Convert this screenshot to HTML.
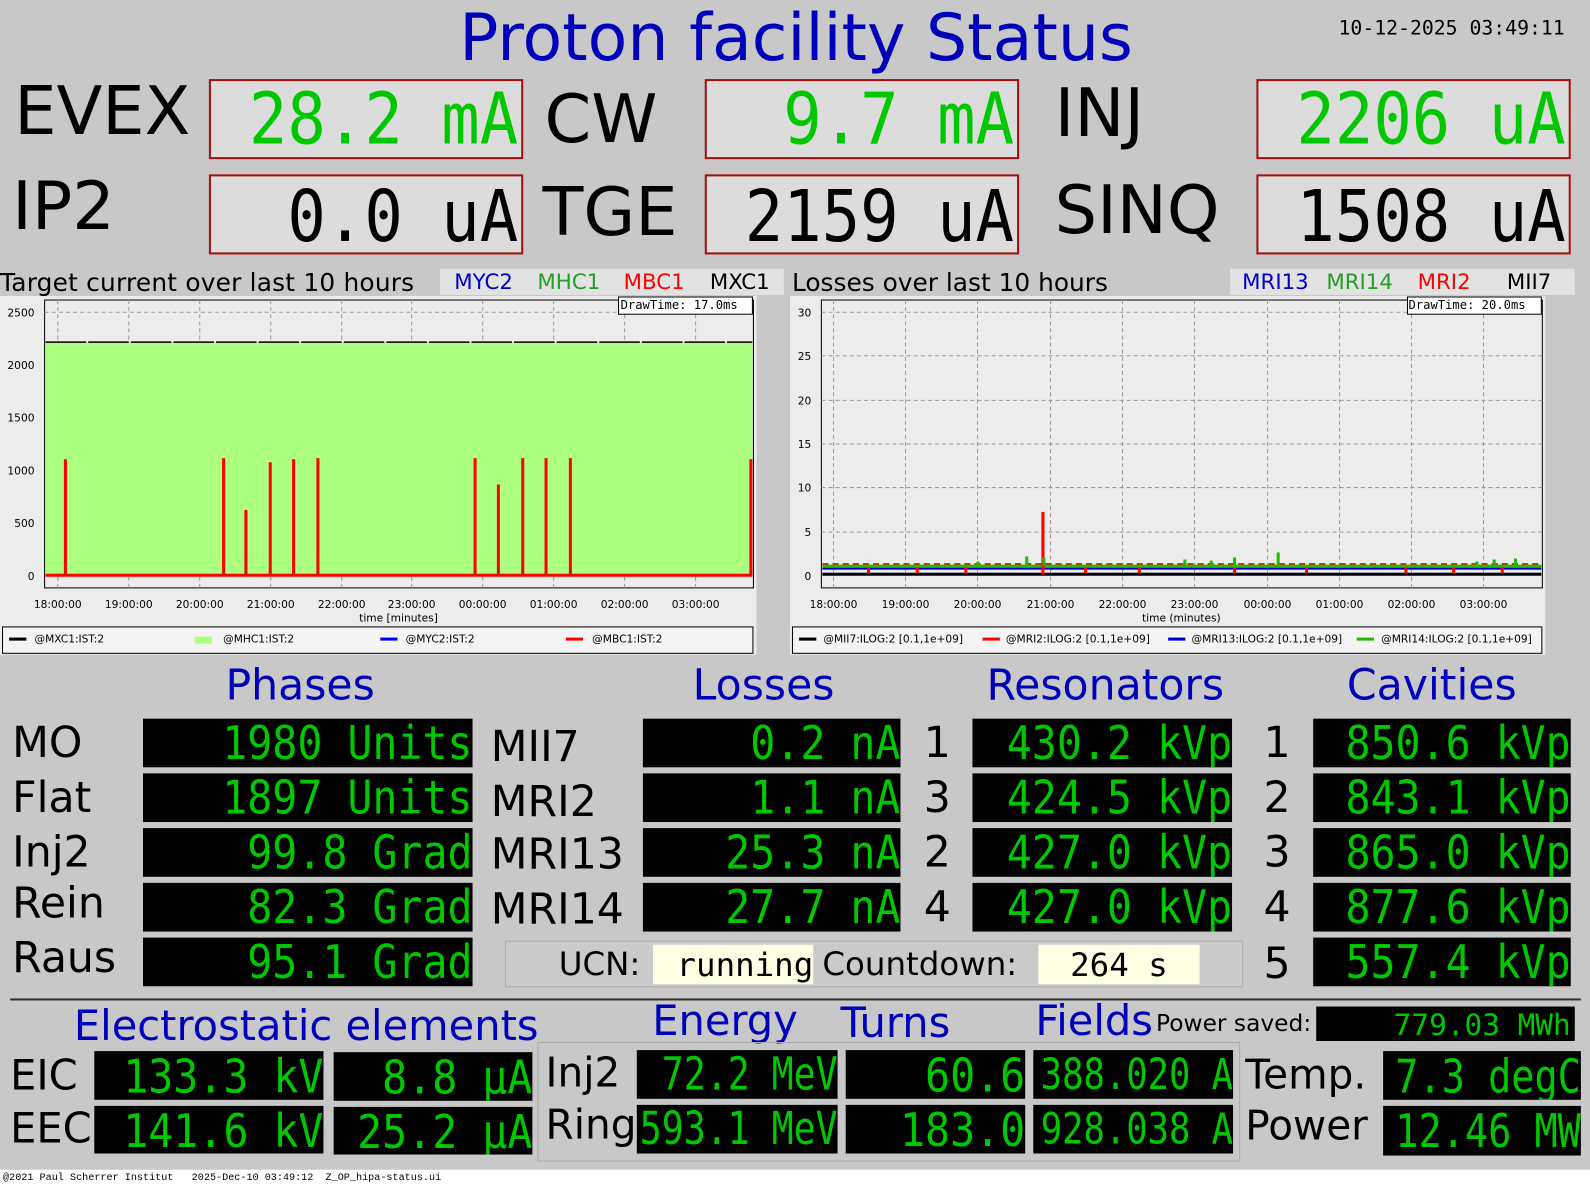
<!DOCTYPE html>
<html><head><meta charset="utf-8"><style>
html,body{margin:0;padding:0;width:1590px;height:1190px;overflow:hidden;background:#c8c8c8}
#w{position:absolute;left:0;top:0;width:1568px;height:1174px;transform:scale(1.01403,1.01363);transform-origin:0 0;background:#c8c8c8;font-family:"DejaVu Sans","Liberation Sans",sans-serif}
.a{position:absolute;white-space:pre}
.lbl{position:absolute;white-space:pre;color:#000;font-family:"DejaVu Sans",sans-serif}
.hd{position:absolute;white-space:pre;color:#0000bb;font-family:"DejaVu Sans",sans-serif;text-align:center}
.tb{position:absolute;background:#dcdcdc;border:2px solid #a01010;box-sizing:border-box;text-align:right;font-family:"DejaVu Sans Mono",monospace;white-space:pre;overflow:hidden}
.bb{position:absolute;background:#000;color:#00c800;text-align:right;font-family:"DejaVu Sans Mono",monospace;white-space:pre;overflow:hidden}
.bb span,.tb span{display:inline-block;transform-origin:center}
.lg{position:absolute;top:0;font-size:21px;line-height:26px}
</style></head><body><div id="w">
<div class="hd" style="left:400px;top:-2px;width:770px;font-size:64px;line-height:80px">Proton facility Status</div>
<div class="a" style="left:1320px;top:16px;font-family:'DejaVu Sans Mono',monospace;font-size:19.5px">10-12-2025 03:49:11</div>

<div class="lbl" style="left:14px;top:70px;font-size:66px;line-height:80px">EVEX</div>
<div class="lbl" style="left:537px;top:78px;font-size:66px;line-height:80px">CW</div>
<div class="lbl" style="left:1040px;top:72px;font-size:66px;line-height:80px">INJ</div>
<div class="lbl" style="left:12px;top:164px;font-size:66px;line-height:80px">IP2</div>
<div class="lbl" style="left:535px;top:170px;font-size:66px;line-height:80px">TGE</div>
<div class="lbl" style="left:1040px;top:168px;font-size:66px;line-height:80px">SINQ</div>

<div class="tb" style="left:206px;top:78px;width:310px;height:79px;color:#00c800;font-size:63px;line-height:76px;padding-right:3px"><span style="transform:scaleY(1.12)">28.2 mA</span></div>
<div class="tb" style="left:695px;top:78px;width:310px;height:79px;color:#00c800;font-size:63px;line-height:76px;padding-right:3px"><span style="transform:scaleY(1.12)">9.7 mA</span></div>
<div class="tb" style="left:1239px;top:78px;width:310px;height:79px;color:#00c800;font-size:63px;line-height:76px;padding-right:3px"><span style="transform:scaleY(1.12)">2206 uA</span></div>
<div class="tb" style="left:206px;top:172px;width:310px;height:79px;color:#000;font-size:63px;line-height:80px;padding-right:3px"><span style="transform:scaleY(1.12)">0.0 uA</span></div>
<div class="tb" style="left:695px;top:172px;width:310px;height:79px;color:#000;font-size:63px;line-height:80px;padding-right:3px"><span style="transform:scaleY(1.12)">2159 uA</span></div>
<div class="tb" style="left:1239px;top:172px;width:310px;height:79px;color:#000;font-size:63px;line-height:80px;padding-right:3px"><span style="transform:scaleY(1.12)">1508 uA</span></div>

<!-- chart titles -->
<div class="lbl" style="left:0;top:264px;font-size:24.5px;line-height:30px;letter-spacing:0.2px">Target current over last 10 hours</div>
<div class="a" style="left:434px;top:265px;width:339px;height:26px;background:#e2e2e2">
<span class="lg" style="left:14px;color:#0000cc">MYC2</span><span class="lg" style="left:96px;color:#22a022">MHC1</span><span class="lg" style="left:181px;color:#ff0000">MBC1</span><span class="lg" style="left:266px">MXC1</span></div>
<div class="lbl" style="left:781px;top:264px;font-size:24.5px;line-height:30px">Losses over last 10 hours</div>
<div class="a" style="left:1213px;top:265px;width:340px;height:26px;background:#e2e2e2">
<span class="lg" style="left:12px;color:#0000cc">MRI13</span><span class="lg" style="left:95px;color:#22a022">MRI14</span><span class="lg" style="left:185px;color:#ff0000">MRI2</span><span class="lg" style="left:273px">MII7</span></div>

<svg class="a" style="left:0;top:292px" width="746" height="354" viewBox="0 292 746 354" font-family="DejaVu Sans" font-size="10.5">
<rect x="0" y="292" width="746" height="354" fill="#ececec"/>
<rect x="44" y="296" width="699" height="284" fill="#ececec" stroke="#000"/>
<g stroke="#999" stroke-dasharray="4,3">
<line x1="44" x2="743" y1="308" y2="308"/>
<line x1="57" x2="57" y1="296" y2="580"/><line x1="127" x2="127" y1="296" y2="580"/><line x1="197" x2="197" y1="296" y2="580"/><line x1="267" x2="267" y1="296" y2="580"/><line x1="337" x2="337" y1="296" y2="580"/><line x1="406" x2="406" y1="296" y2="580"/><line x1="476" x2="476" y1="296" y2="580"/><line x1="546" x2="546" y1="296" y2="580"/><line x1="616" x2="616" y1="296" y2="580"/><line x1="686" x2="686" y1="296" y2="580"/>
</g>
<rect x="45" y="338" width="697" height="230" fill="#adff7f"/>
<line x1="45" x2="742" y1="337.5" y2="337.5" stroke="#000" stroke-width="1.5" stroke-dasharray="40,2"/>
<g fill="#f00">
<rect x="45" y="566" width="697" height="3"/>
<rect x="63" y="453" width="3" height="114"/><rect x="219" y="452" width="3" height="115"/><rect x="241" y="503" width="3" height="64"/><rect x="265" y="456" width="3" height="111"/><rect x="288" y="453" width="3" height="114"/><rect x="312" y="452" width="3" height="115"/><rect x="467" y="452" width="3" height="115"/><rect x="490" y="478" width="3" height="89"/><rect x="514" y="452" width="3" height="115"/><rect x="537" y="452" width="3" height="115"/><rect x="561" y="452" width="3" height="115"/><rect x="739" y="453" width="3" height="114"/>
</g>
<g text-anchor="end"><text x="34" y="312">2500</text><text x="34" y="364">2000</text><text x="34" y="416">1500</text><text x="34" y="468">1000</text><text x="34" y="520">500</text><text x="34" y="572">0</text></g>
<g text-anchor="middle"><text x="57" y="600">18:00:00</text><text x="127" y="600">19:00:00</text><text x="197" y="600">20:00:00</text><text x="267" y="600">21:00:00</text><text x="337" y="600">22:00:00</text><text x="406" y="600">23:00:00</text><text x="476" y="600">00:00:00</text><text x="546" y="600">01:00:00</text><text x="616" y="600">02:00:00</text><text x="686" y="600">03:00:00</text><text x="393" y="613">time [minutes]</text></g>
<rect x="610" y="293" width="132" height="17" fill="#fff" stroke="#000"/>
<text x="612" y="305" font-family="DejaVu Sans Mono" font-size="12">DrawTime: 17.0ms</text>
<rect x="2.5" y="618.5" width="740" height="26" fill="#f4f4f4" stroke="#000"/>
<rect x="9" y="629" width="17" height="3"/><text x="34" y="634">@MXC1:IST:2</text>
<rect x="192" y="628" width="17" height="7" fill="#adff7f"/><text x="220" y="634">@MHC1:IST:2</text>
<rect x="375" y="629" width="17" height="3" fill="#00f"/><text x="400" y="634">@MYC2:IST:2</text>
<rect x="558" y="629" width="17" height="3" fill="#f00"/><text x="584" y="634">@MBC1:IST:2</text>
</svg>

<svg class="a" style="left:779px;top:292px" width="745" height="354" viewBox="779 292 745 354" font-family="DejaVu Sans" font-size="10.5">
<rect x="779" y="292" width="745" height="354" fill="#ececec"/>
<rect x="810" y="296" width="711" height="284" fill="#ececec" stroke="#000"/>
<g stroke="#999" stroke-dasharray="4,3">
<line x1="810" x2="1521" y1="308" y2="308"/><line x1="810" x2="1521" y1="351" y2="351"/><line x1="810" x2="1521" y1="395" y2="395"/><line x1="810" x2="1521" y1="438" y2="438"/><line x1="810" x2="1521" y1="481" y2="481"/><line x1="810" x2="1521" y1="525" y2="525"/>
<line x1="822" x2="822" y1="296" y2="580"/><line x1="893" x2="893" y1="296" y2="580"/><line x1="964" x2="964" y1="296" y2="580"/><line x1="1036" x2="1036" y1="296" y2="580"/><line x1="1107" x2="1107" y1="296" y2="580"/><line x1="1178" x2="1178" y1="296" y2="580"/><line x1="1250" x2="1250" y1="296" y2="580"/><line x1="1321" x2="1321" y1="296" y2="580"/><line x1="1392" x2="1392" y1="296" y2="580"/><line x1="1463" x2="1463" y1="296" y2="580"/>
</g>
<line x1="811" x2="1520" y1="557" y2="557" stroke="#f00" stroke-width="3" stroke-dasharray="6,4"/>
<rect x="811" y="560" width="709" height="2" fill="#0000cc"/>
<rect x="811" y="557" width="709" height="3" fill="#22bb00"/>
<rect x="811" y="565" width="709" height="3" fill="#000"/>
<rect x="1027" y="505" width="3" height="62" fill="#f00"/>
<g fill="#22bb00"><rect x="1011" y="549" width="3" height="9"/><rect x="1259" y="545" width="3" height="13"/><rect x="1028" y="550" width="3" height="8"/><rect x="1216" y="550" width="3" height="8"/><rect x="1493" y="551" width="3" height="7"/><rect x="1193" y="553" width="3" height="5"/><rect x="1472" y="552" width="3" height="6"/><rect x="1455" y="554" width="3" height="4"/><rect x="963" y="554" width="3" height="4"/><rect x="1167" y="552" width="3" height="6"/></g>
<g fill="#f00"><rect x="855" y="560" width="3" height="6"/><rect x="903" y="560" width="3" height="6"/><rect x="951" y="560" width="3" height="6"/><rect x="1069" y="560" width="3" height="6"/><rect x="1122" y="560" width="3" height="6"/><rect x="1216" y="560" width="3" height="6"/><rect x="1287" y="560" width="3" height="6"/><rect x="1385" y="560" width="3" height="6"/><rect x="1432" y="560" width="3" height="6"/><rect x="1480" y="560" width="3" height="6"/></g>
<g text-anchor="end"><text x="800" y="312">30</text><text x="800" y="355">25</text><text x="800" y="399">20</text><text x="800" y="442">15</text><text x="800" y="485">10</text><text x="800" y="529">5</text><text x="800" y="572">0</text></g>
<g text-anchor="middle"><text x="822" y="600">18:00:00</text><text x="893" y="600">19:00:00</text><text x="964" y="600">20:00:00</text><text x="1036" y="600">21:00:00</text><text x="1107" y="600">22:00:00</text><text x="1178" y="600">23:00:00</text><text x="1250" y="600">00:00:00</text><text x="1321" y="600">01:00:00</text><text x="1392" y="600">02:00:00</text><text x="1463" y="600">03:00:00</text><text x="1165" y="613">time (minutes)</text></g>
<rect x="1388" y="293" width="132" height="17" fill="#fff" stroke="#000"/>
<text x="1389" y="305" font-family="DejaVu Sans Mono" font-size="12">DrawTime: 20.0ms</text>
<rect x="781.5" y="618.5" width="739" height="26" fill="#f4f4f4" stroke="#000"/>
<g font-size="10.5">
<rect x="788" y="629" width="17" height="3"/><text x="812" y="634">@MII7:ILOG:2 [0.1,1e+09]</text>
<rect x="969" y="629" width="17" height="3" fill="#f00"/><text x="992" y="634">@MRI2:ILOG:2 [0.1,1e+09]</text>
<rect x="1152" y="629" width="17" height="3" fill="#0000cc"/><text x="1175" y="634">@MRI13:ILOG:2 [0.1,1e+09]</text>
<rect x="1338" y="629" width="17" height="3" fill="#22bb00"/><text x="1362" y="634">@MRI14:ILOG:2 [0.1,1e+09]</text>
</g>
</svg>

<!-- section headers -->
<div class="hd" style="left:196px;top:651px;width:200px;font-size:42px;line-height:50px">Phases</div>
<div class="hd" style="left:653px;top:651px;width:200px;font-size:42px;line-height:50px">Losses</div>
<div class="hd" style="left:960px;top:651px;width:260px;font-size:42px;line-height:50px">Resonators</div>
<div class="hd" style="left:1312px;top:651px;width:200px;font-size:42px;line-height:50px">Cavities</div>

<div class="lbl" style="left:12px;top:708px;font-size:42px;line-height:50px">MO</div>
<div class="lbl" style="left:12px;top:762px;font-size:42px;line-height:50px">Flat</div>
<div class="lbl" style="left:12px;top:816px;font-size:42px;line-height:50px">Inj2</div>
<div class="lbl" style="left:12px;top:866px;font-size:42px;line-height:50px">Rein</div>
<div class="lbl" style="left:12px;top:920px;font-size:42px;line-height:50px">Raus</div>
<div class="lbl" style="left:484px;top:712px;font-size:42px;line-height:50px">MII7</div>
<div class="lbl" style="left:484px;top:766px;font-size:42px;line-height:50px">MRI2</div>
<div class="lbl" style="left:484px;top:818px;font-size:42px;line-height:50px">MRI13</div>
<div class="lbl" style="left:484px;top:872px;font-size:42px;line-height:50px">MRI14</div>
<div class="lbl" style="left:911px;top:708px;font-size:42px;line-height:50px">1</div>
<div class="lbl" style="left:911px;top:762px;font-size:42px;line-height:50px">3</div>
<div class="lbl" style="left:911px;top:816px;font-size:42px;line-height:50px">2</div>
<div class="lbl" style="left:911px;top:870px;font-size:42px;line-height:50px">4</div>
<div class="lbl" style="left:1246px;top:708px;font-size:42px;line-height:50px">1</div>
<div class="lbl" style="left:1246px;top:762px;font-size:42px;line-height:50px">2</div>
<div class="lbl" style="left:1246px;top:816px;font-size:42px;line-height:50px">3</div>
<div class="lbl" style="left:1246px;top:870px;font-size:42px;line-height:50px">4</div>
<div class="lbl" style="left:1246px;top:926px;font-size:42px;line-height:50px">5</div>

<div class="bb" style="left:141px;top:709px;width:325px;height:48px;font-size:41px;line-height:48px"><span style="transform:scaleY(1.12)">1980 Units</span></div>
<div class="bb" style="left:141px;top:763px;width:325px;height:48px;font-size:41px;line-height:48px"><span style="transform:scaleY(1.12)">1897 Units</span></div>
<div class="bb" style="left:141px;top:817px;width:325px;height:48px;font-size:41px;line-height:48px"><span style="transform:scaleY(1.12)">99.8 Grad</span></div>
<div class="bb" style="left:141px;top:871px;width:325px;height:48px;font-size:41px;line-height:48px"><span style="transform:scaleY(1.12)">82.3 Grad</span></div>
<div class="bb" style="left:141px;top:925px;width:325px;height:48px;font-size:41px;line-height:48px"><span style="transform:scaleY(1.12)">95.1 Grad</span></div>

<div class="bb" style="left:634px;top:709px;width:254px;height:48px;font-size:41px;line-height:48px"><span style="transform:scaleY(1.12)">0.2 nA</span></div>
<div class="bb" style="left:634px;top:763px;width:254px;height:48px;font-size:41px;line-height:48px"><span style="transform:scaleY(1.12)">1.1 nA</span></div>
<div class="bb" style="left:634px;top:817px;width:254px;height:48px;font-size:41px;line-height:48px"><span style="transform:scaleY(1.12)">25.3 nA</span></div>
<div class="bb" style="left:634px;top:871px;width:254px;height:48px;font-size:41px;line-height:48px"><span style="transform:scaleY(1.12)">27.7 nA</span></div>

<div class="bb" style="left:959px;top:709px;width:256px;height:48px;font-size:41px;line-height:48px"><span style="transform:scaleY(1.12)">430.2 kVp</span></div>
<div class="bb" style="left:959px;top:763px;width:256px;height:48px;font-size:41px;line-height:48px"><span style="transform:scaleY(1.12)">424.5 kVp</span></div>
<div class="bb" style="left:959px;top:817px;width:256px;height:48px;font-size:41px;line-height:48px"><span style="transform:scaleY(1.12)">427.0 kVp</span></div>
<div class="bb" style="left:959px;top:871px;width:256px;height:48px;font-size:41px;line-height:48px"><span style="transform:scaleY(1.12)">427.0 kVp</span></div>

<div class="bb" style="left:1295px;top:709px;width:254px;height:48px;font-size:41px;line-height:48px"><span style="transform:scaleY(1.12)">850.6 kVp</span></div>
<div class="bb" style="left:1295px;top:763px;width:254px;height:48px;font-size:41px;line-height:48px"><span style="transform:scaleY(1.12)">843.1 kVp</span></div>
<div class="bb" style="left:1295px;top:817px;width:254px;height:48px;font-size:41px;line-height:48px"><span style="transform:scaleY(1.12)">865.0 kVp</span></div>
<div class="bb" style="left:1295px;top:871px;width:254px;height:48px;font-size:41px;line-height:48px"><span style="transform:scaleY(1.12)">877.6 kVp</span></div>
<div class="bb" style="left:1295px;top:925px;width:254px;height:48px;font-size:41px;line-height:48px"><span style="transform:scaleY(1.12)">557.4 kVp</span></div>

<!-- UCN -->
<div class="a" style="left:498px;top:928px;width:728px;height:46px;border:1px solid #aaa;box-sizing:border-box;background:#cacaca"></div>
<div class="lbl" style="left:551px;top:930px;font-size:32px;line-height:42px">UCN:</div>
<div class="a" style="left:644px;top:932px;width:158px;height:39px;background:#ffffe4;font-family:'DejaVu Sans Mono',monospace;font-size:32px;line-height:40px;text-align:right">running</div>
<div class="lbl" style="left:811px;top:930px;font-size:32px;line-height:42px">Countdown:</div>
<div class="a" style="left:1024px;top:932px;width:159px;height:39px;background:#ffffe4;font-family:'DejaVu Sans Mono',monospace;font-size:32px;line-height:40px;text-align:center">264 s</div>

<div class="a" style="left:10px;top:985px;width:1549px;height:2px;background:#333"></div>

<!-- bottom -->
<div class="hd" style="left:66px;top:987px;width:472px;font-size:41px;line-height:50px">Electrostatic elements</div>
<div class="hd" style="left:640px;top:982px;width:150px;font-size:41px;line-height:50px">Energy</div>
<div class="hd" style="left:822px;top:984px;width:122px;font-size:41px;line-height:50px">Turns</div>
<div class="hd" style="left:1018px;top:982px;width:122px;font-size:41px;line-height:50px">Fields</div>
<div class="lbl" style="left:1140px;top:995px;font-size:23px;line-height:30px">Power saved:</div>
<div class="bb" style="left:1298px;top:993px;width:255px;height:34px;font-size:29px;line-height:36px;padding-right:4px;box-sizing:border-box">779.03 MWh</div>

<div class="lbl" style="left:10px;top:1036px;font-size:41px;line-height:50px">EIC</div>
<div class="lbl" style="left:10px;top:1088px;font-size:41px;line-height:50px">EEC</div>
<div class="bb" style="left:93px;top:1037px;width:226px;height:48px;font-size:41px;line-height:50px"><span style="transform:scaleY(1.12)">133.3 kV</span></div>
<div class="bb" style="left:93px;top:1091px;width:226px;height:47px;font-size:41px;line-height:50px"><span style="transform:scaleY(1.12)">141.6 kV</span></div>
<div class="bb" style="left:329px;top:1038px;width:196px;height:48px;font-size:41px;line-height:50px"><span style="transform:scaleY(1.12)">8.8 µA</span></div>
<div class="bb" style="left:329px;top:1092px;width:196px;height:47px;font-size:41px;line-height:50px"><span style="transform:scaleY(1.12)">25.2 µA</span></div>

<div class="a" style="left:530px;top:1028px;width:693px;height:118px;border:1px solid #aaa;box-sizing:border-box"></div>
<div class="lbl" style="left:538px;top:1034px;font-size:40px;line-height:50px">Inj2</div>
<div class="lbl" style="left:538px;top:1085px;font-size:40px;line-height:50px">Ring</div>
<div class="bb" style="left:628px;top:1036px;width:198px;height:48px;font-size:36px;line-height:50px"><span style="transform:scaleY(1.25)">72.2 MeV</span></div>
<div class="bb" style="left:628px;top:1090px;width:198px;height:48px;font-size:36px;line-height:50px"><span style="transform:scaleY(1.25)">593.1 MeV</span></div>
<div class="bb" style="left:834px;top:1036px;width:177px;height:48px;font-size:41px;line-height:50px"><span style="transform:scaleY(1.12)">60.6</span></div>
<div class="bb" style="left:834px;top:1090px;width:177px;height:48px;font-size:41px;line-height:50px"><span style="transform:scaleY(1.12)">183.0</span></div>
<div class="bb" style="left:1019px;top:1036px;width:197px;height:48px;font-size:35px;line-height:50px"><span style="transform:scaleY(1.2)">388.020 A</span></div>
<div class="bb" style="left:1019px;top:1090px;width:197px;height:48px;font-size:35px;line-height:50px"><span style="transform:scaleY(1.2)">928.038 A</span></div>

<div class="lbl" style="left:1228px;top:1036px;font-size:40px;line-height:50px">Temp.</div>
<div class="lbl" style="left:1228px;top:1086px;font-size:40px;line-height:50px">Power</div>
<div class="bb" style="left:1364px;top:1037px;width:195px;height:48px;font-size:38px;line-height:50px"><span style="transform:scaleY(1.2)">7.3 degC</span></div>
<div class="bb" style="left:1364px;top:1091px;width:195px;height:49px;font-size:38px;line-height:50px"><span style="transform:scaleY(1.2)">12.46 MW</span></div>

<div class="a" style="left:0;top:1154px;width:1568px;height:20px;background:#fff"></div>
<div class="a" style="left:3px;top:1156px;font-family:'Liberation Mono',monospace;font-size:10px;line-height:14px">@2021 Paul Scherrer Institut   2025-Dec-10 03:49:12  Z_OP_hipa-status.ui</div>
</div></body></html>
